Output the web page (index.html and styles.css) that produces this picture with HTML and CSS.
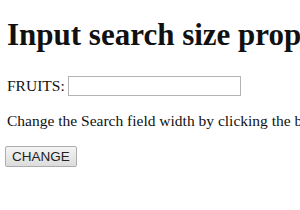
FILE: index.html
```html
<!DOCTYPE html>
<html lang="en">
<head>
    <meta charset="UTF-8">
    <title>Input search size property</title>
    <link rel="stylesheet" href="styles.css">
</head>
<body>
    <h1>Input search size property</h1>

    <div class="field">
        <label for="fruits">FRUITS:</label>
        <input type="search" id="fruits" class="search-box">
    </div>

    <p>Change the Search field width by clicking the button below.</p>

    <button class="change-btn">CHANGE</button>
</body>
</html>
```

FILE: styles.css
```css
body {
    font-family: "Liberation Serif", "Times New Roman", serif;
    font-size: 15.5px;
    color: #111;
    background: #fff;
    margin: 0;
    padding: 0 7px;
    white-space: nowrap;
    overflow: hidden;
}
h1 {
    font-size: 31px;
    font-weight: bold;
    margin: 17px 0 23px;
}
.field {
    display: flex;
    align-items: center;
    gap: 3px;
    height: 20px;
}
.search-box {
    box-sizing: border-box;
    width: 173px;
    height: 20px;
    padding: 1px;
    border: 1px solid #b4b4b4;
    margin: 0;
}
p {
    margin: 16px 0 16px;
}
.change-btn {
    box-sizing: border-box;
    width: 72px;
    height: 21px;
    font-family: "Liberation Sans", Arial, sans-serif;
    font-size: 13.5px;
    color: #222;
    padding: 0;
    margin: 0 0 0 -2px;
    border: 1px solid #acacac;
    border-radius: 2px;
    background: linear-gradient(#f4f4f4, #dcdcdc);
}
```
